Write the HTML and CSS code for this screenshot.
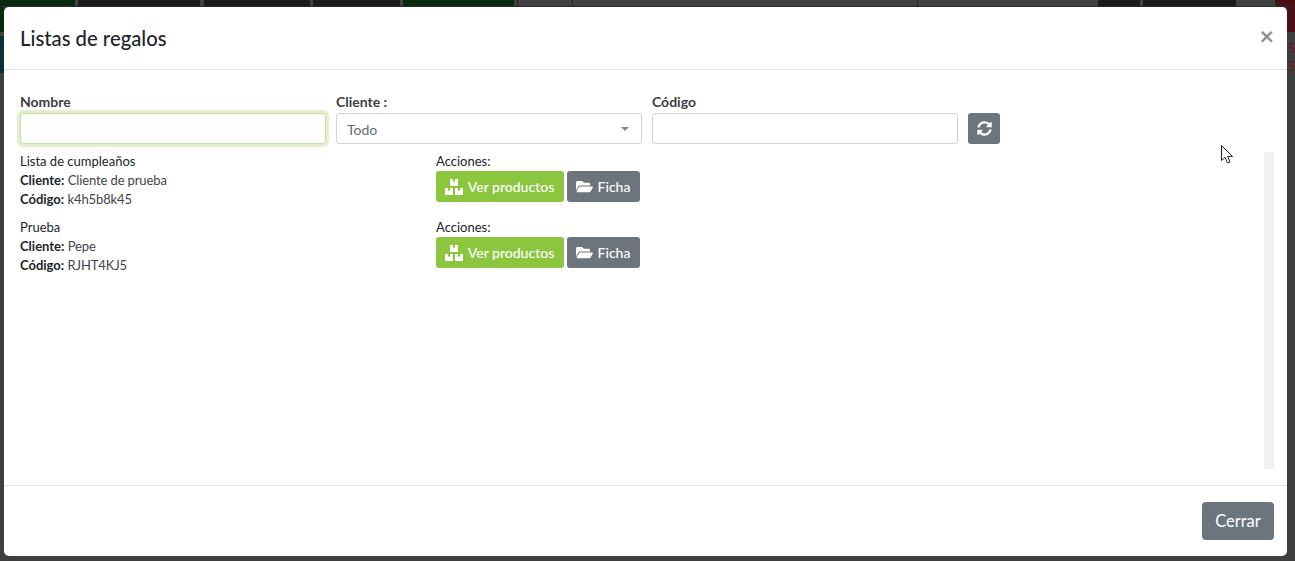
FILE: index.html
```html
<!DOCTYPE html>
<html lang="es">
<head>
<meta charset="utf-8">
<title>Listas de regalos</title>
<link rel="stylesheet" href="styles.css">
</head>
<body>
<div class="backdrop">
  <div class="topbar">
    <span class="g"></span><span class="m"></span><span class="d"></span><span class="m"></span><span class="d"></span><span class="m"></span><span class="d"></span><span class="m"></span><span class="g"></span><span class="m"></span><span class="l"></span><span class="m"></span><span class="l"></span><span class="m"></span><span class="l"></span><span class="m"></span><span class="m"></span><span class="m"></span><span class="d"></span><span class="m"></span><span class="d"></span><span class="m"></span><span class="l"></span><span class="r"></span>
  </div>
  <div class="edge-left"><span class="eg"></span><span class="et"></span></div>
  <div class="edge-right"><span class="er"></span><span class="ev">5</span><span class="ev">5</span></div>
</div>
<div class="modal">
  <header class="modal-header">
    <h5 class="modal-title">Listas de regalos</h5>
    <span class="close">×</span>
  </header>
  <main class="modal-body">
    <form class="filters">
      <div class="field"><label>Nombre</label><input class="control focused" type="text"></div>
      <div class="field"><label>Cliente :</label><div class="control select"><span>Todo</span><i class="caret"></i></div></div>
      <div class="field"><label>Código</label><input class="control" type="text"></div>
      <button type="button" class="btn gray refresh" aria-label="Actualizar">
        <svg viewBox="0 0 512 512" width="15" height="15"><path fill="#fff" d="M370.72 133.28C339.458 104.008 298.888 87.962 255.848 88c-77.458.068-144.328 53.178-162.791 126.85-1.344 5.363-6.122 9.15-11.651 9.15H24.103c-7.498 0-13.194-6.807-11.807-14.176C33.933 94.924 134.813 8 256 8c66.448 0 126.791 26.136 171.315 68.685L463.03 40.97C478.149 25.851 504 36.559 504 57.941V192c0 13.255-10.745 24-24 24H345.941c-21.382 0-32.09-25.851-16.971-40.971l41.75-41.749zM32 296h134.059c21.382 0 32.09 25.851 16.971 40.971l-41.75 41.75c31.262 29.273 71.835 45.319 114.876 45.28 77.418-.07 144.315-53.144 162.787-126.849 1.344-5.363 6.122-9.15 11.651-9.15h57.304c7.498 0 13.193 6.807 11.807 14.176C478.067 417.076 377.187 504 256 504c-66.448 0-126.791-26.136-171.315-68.685L48.97 471.03C33.851 486.149 8 475.441 8 454.059V320c0-13.255 10.745-24 24-24z"/></svg>
      </button>
    </form>
    <div class="results">
      <section class="list-row">
        <div class="info">
          <div>Lista de cumpleaños</div>
          <div><b>Cliente:</b> <span class="val">Cliente de prueba</span></div>
          <div><b>Código:</b> <span class="val">k4h5b8k45</span></div>
        </div>
        <div class="actions">
          <div>Acciones:</div>
          <div class="btns">
            <button type="button" class="btn green">
              <svg viewBox="0 0 576 512" width="18" height="16"><path fill="#fff" d="M560 288h-80v96l-32-21.3-32 21.3v-96h-80c-8.8 0-16 7.2-16 16v192c0 8.8 7.2 16 16 16h224c8.8 0 16-7.2 16-16V304c0-8.8-7.2-16-16-16zm-384-64h224c8.8 0 16-7.2 16-16V16c0-8.8-7.2-16-16-16h-80v96l-32-21.3L256 96V0h-80c-8.8 0-16 7.2-16 16v192c0 8.8 7.2 16 16 16zm64 64h-80v96l-32-21.3L96 384v-96H16c-8.8 0-16 7.2-16 16v192c0 8.8 7.2 16 16 16h224c8.8 0 16-7.2 16-16V304c0-8.8-7.2-16-16-16z"/></svg>Ver productos
            </button>
            <button type="button" class="btn gray">
              <svg viewBox="0 0 576 512" width="17" height="15"><path fill="#fff" d="M572.694 292.093L500.27 416.248A63.997 63.997 0 0 1 444.989 448H45.025c-18.523 0-30.064-20.093-20.731-36.093l72.424-124.155A64 64 0 0 1 152 256h399.964c18.523 0 30.064 20.093 20.73 36.093zM152 224h328v-48c0-26.51-21.49-48-48-48H272l-64-64H48C21.49 64 0 85.49 0 112v278.046l69.077-118.418C86.214 242.25 117.989 224 152 224z"/></svg>Ficha
            </button>
          </div>
        </div>
      </section>
      <section class="list-row">
        <div class="info">
          <div>Prueba</div>
          <div><b>Cliente:</b> <span class="val">Pepe</span></div>
          <div><b>Código:</b> <span class="val">RJHT4KJ5</span></div>
        </div>
        <div class="actions">
          <div>Acciones:</div>
          <div class="btns">
            <button type="button" class="btn green">
              <svg viewBox="0 0 576 512" width="18" height="16"><path fill="#fff" d="M560 288h-80v96l-32-21.3-32 21.3v-96h-80c-8.8 0-16 7.2-16 16v192c0 8.8 7.2 16 16 16h224c8.8 0 16-7.2 16-16V304c0-8.8-7.2-16-16-16zm-384-64h224c8.8 0 16-7.2 16-16V16c0-8.8-7.2-16-16-16h-80v96l-32-21.3L256 96V0h-80c-8.8 0-16 7.2-16 16v192c0 8.8 7.2 16 16 16zm64 64h-80v96l-32-21.3L96 384v-96H16c-8.8 0-16 7.2-16 16v192c0 8.8 7.2 16 16 16h224c8.8 0 16-7.2 16-16V304c0-8.8-7.2-16-16-16z"/></svg>Ver productos
            </button>
            <button type="button" class="btn gray">
              <svg viewBox="0 0 576 512" width="17" height="15"><path fill="#fff" d="M572.694 292.093L500.27 416.248A63.997 63.997 0 0 1 444.989 448H45.025c-18.523 0-30.064-20.093-20.731-36.093l72.424-124.155A64 64 0 0 1 152 256h399.964c18.523 0 30.064 20.093 20.73 36.093zM152 224h328v-48c0-26.51-21.49-48-48-48H272l-64-64H48C21.49 64 0 85.49 0 112v278.046l69.077-118.418C86.214 242.25 117.989 224 152 224z"/></svg>Ficha
            </button>
          </div>
        </div>
      </section>
      <div class="scroll-track"></div>
    </div>
  </main>
  <footer class="modal-footer">
    <button type="button" class="btn gray close-btn">Cerrar</button>
  </footer>
  <svg class="cursor" viewBox="0 0 12 19" width="12" height="19"><path fill="#fff" stroke="#1c1c1c" stroke-width="1" d="M.5.5v15l3.6-3.2 2.3 5.6 2.6-1-2.3-5.5h4.8z"/></svg>
</div>
</body>
</html>
```

FILE: styles.css
```css
* { box-sizing: border-box; }
html, body { margin: 0; height: 100%; overflow: hidden; }
body { background: #3e3e3e; font-family: Lato, "Open Sans", sans-serif; color: #212529; }

.backdrop { position: fixed; inset: 0; background: #3e3e3e; }
.topbar {
  display: grid; height: 7px; background: #414141; border-bottom: 1px solid #2a2a2a;
  grid-template-columns: 75px 3px 122px 4px 106px 3px 87px 3px 111px 3px 1px 54px 1px 344px 1px 79px 5px 96px 42px 3px 93px 39px 2px 18px;
}
.topbar .g { background: #0a2a10; }
.topbar .d { background: #1c1c1c; }
.topbar .m { background: #414141; }
.topbar .l { background: #262626; }
.topbar .r { background: #4a0f14; }
.edge-left { position: absolute; left: 0; top: 7px; width: 4px; }
.eg { display: block; height: 25px; background: #0a2a10; }
.et { display: block; height: 37px; margin-top: 4px; background: #0a3038; }
.edge-right { position: absolute; right: 0; top: 7px; width: 8px; overflow: hidden; display: flex; flex-direction: column; font-size: 13px; line-height: 18px; color: #6e1420; }
.er { display: block; height: 25px; background: #4a0f14; margin-bottom: 7px; }
.ev { display: block; margin-left: 1px; }

.modal {
  position: fixed; left: 4px; top: 7px; width: 1283px; height: 549px;
  background: #fff; border-radius: 5px;
  display: flex; flex-direction: column;
}
.modal-header {
  height: 63px; flex: none; border-bottom: 1px solid #dee2e6;
  display: flex; justify-content: space-between; align-items: flex-start;
  padding: 16px 13px 0 16px;
}
.modal-title { margin: 0; font-size: 20.3px; font-weight: 500; line-height: 30px; color: #212529; }
.close { font-size: 25px; font-weight: 700; line-height: 24px; color: #8f8f8f; font-family: Lato, sans-serif; }

.modal-body { flex: 1; min-height: 0; padding: 20px 16px 16px; display: flex; flex-direction: column; }
.filters { display: flex; align-items: flex-end; gap: 10px; }
.field { display: flex; flex-direction: column; width: 306px; }
label { font-size: 14px; font-weight: 700; line-height: 23px; color: #3a3f44; margin-bottom: 2px; height: 21px; }
.control {
  height: 31px; width: 100%; border: 1px solid #ced4da; border-radius: 3px; background: #fff;
  font: inherit; outline: 0; padding: 0;
}
.control.focused { border-color: #c5e2a0; box-shadow: 0 0 0 3px #e3f0cf; }
.select { display: flex; align-items: center; justify-content: space-between; padding: 1px 12px 0 10px; font-size: 14px; color: #666d74; }
.caret { width: 0; height: 0; border-left: 4.5px solid transparent; border-right: 4.5px solid transparent; border-top: 4px solid #888; }

.btn {
  border: 0; border-radius: 3px; color: #fff; font-family: inherit; font-size: 14px; font-weight: 500;
  display: inline-flex; align-items: center; justify-content: center; cursor: pointer; padding: 0;
}
.btn.gray { background: #6c757d; }
.btn.green { background: #8cc63f; }
.refresh { width: 32px; height: 31px; flex: none; }

.results { position: relative; flex: 1; min-height: 0; padding-top: 8px; }
.list-row { display: grid; grid-template-columns: 416px auto; height: 66px; font-size: 13px; line-height: 19px; color: #212529; }
.list-row b { font-weight: 700; color: #212529; }
.val { letter-spacing: -0.12px; color: #3f4448; }
.btns { display: flex; gap: 3px; }
.btns .btn { height: 31px; gap: 5px; }
.btns .green { width: 128px; padding-right: 1px; }
.btns .gray { width: 73px; padding-right: 1px; }
.scroll-track { position: absolute; right: -3px; top: 8px; width: 10px; height: 317px; background: #f1f1f1; }

.modal-footer {
  height: 71px; flex: none; border-top: 1px solid #dee2e6;
  display: flex; justify-content: flex-end; align-items: flex-start; padding: 16px 13px 0 0;
}
.close-btn { width: 72px; height: 38px; font-size: 16.5px; font-weight: 400; border-radius: 4px; }
.cursor { position: absolute; left: 1217px; top: 138px; }
```
